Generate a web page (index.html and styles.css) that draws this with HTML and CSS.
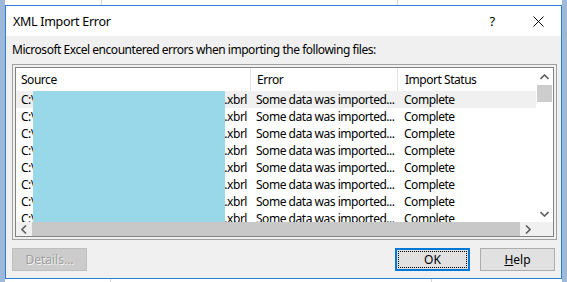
FILE: index.html
```html
<!DOCTYPE html>
<html>
<head>
    <meta charset="utf-8" />
    <title>XML Import Error</title>
    <link rel="stylesheet" href="styles.css">
</head>
<body>
    <div class="dialog">
        <div class="titlebar">
            <div class="title">XML Import Error</div>
            <div class="caption-btn help-btn">?</div>
            <div class="caption-btn close-btn">
                <svg width="11" height="11" viewBox="0 0 11 11">
                    <path d="M0.5 0.5 L10.5 10.5 M10.5 0.5 L0.5 10.5" stroke="#000" stroke-width="1" fill="none" />
                </svg>
            </div>
        </div>
        <div class="dialog-body">
            <div class="message">Microsoft Excel encountered errors when importing the following files:</div>
            <div class="frame">
                <div class="listview">
                    <div class="list-main">
                        <div class="list-head">
                            <div class="col col-source">Source</div>
                            <div class="col col-error">Error</div>
                            <div class="col col-status">Import Status</div>
                        </div>
                        <div class="list-rows">
                            <div class="row selected">
                                <div class="col col-source"><span>C:\</span><span>.xbrl</span></div>
                                <div class="col col-error">Some data was imported...</div>
                                <div class="col col-status">Complete</div>
                            </div>
                            <div class="row">
                                <div class="col col-source"><span>C:\</span><span>.xbrl</span></div>
                                <div class="col col-error">Some data was imported...</div>
                                <div class="col col-status">Complete</div>
                            </div>
                            <div class="row">
                                <div class="col col-source"><span>C:\</span><span>.xbrl</span></div>
                                <div class="col col-error">Some data was imported...</div>
                                <div class="col col-status">Complete</div>
                            </div>
                            <div class="row">
                                <div class="col col-source"><span>C:\</span><span>.xbrl</span></div>
                                <div class="col col-error">Some data was imported...</div>
                                <div class="col col-status">Complete</div>
                            </div>
                            <div class="row">
                                <div class="col col-source"><span>C:\</span><span>.xbrl</span></div>
                                <div class="col col-error">Some data was imported...</div>
                                <div class="col col-status">Complete</div>
                            </div>
                            <div class="row">
                                <div class="col col-source"><span>C:\</span><span>.xbrl</span></div>
                                <div class="col col-error">Some data was imported...</div>
                                <div class="col col-status">Complete</div>
                            </div>
                            <div class="row">
                                <div class="col col-source"><span>C:\</span><span>.xbrl</span></div>
                                <div class="col col-error">Some data was imported...</div>
                                <div class="col col-status">Complete</div>
                            </div>
                            <div class="row">
                                <div class="col col-source"><span>C:\</span><span>.xbrl</span></div>
                                <div class="col col-error">Some data was imported...</div>
                                <div class="col col-status">Complete</div>
                            </div>
                            <div class="redact"></div>
                        </div>
                    </div>
                    <div class="vscroll">
                        <div class="sb-btn">
                            <svg width="9" height="6" viewBox="0 0 9 6"><path d="M0.5 5 L4.5 1 L8.5 5" stroke="#606060" stroke-width="1.6" fill="none" /></svg>
                        </div>
                        <div class="vthumb"></div>
                        <div class="vtrack"></div>
                        <div class="sb-btn">
                            <svg width="9" height="6" viewBox="0 0 9 6"><path d="M0.5 1 L4.5 5 L8.5 1" stroke="#606060" stroke-width="1.6" fill="none" /></svg>
                        </div>
                    </div>
                    <div class="hscroll">
                        <div class="sb-btn h">
                            <svg width="6" height="9" viewBox="0 0 6 9"><path d="M5 0.5 L1 4.5 L5 8.5" stroke="#606060" stroke-width="1.6" fill="none" /></svg>
                        </div>
                        <div class="hthumb"></div>
                        <div class="sb-btn h">
                            <svg width="6" height="9" viewBox="0 0 6 9"><path d="M1 0.5 L5 4.5 L1 8.5" stroke="#606060" stroke-width="1.6" fill="none" /></svg>
                        </div>
                    </div>
                    <div class="corner"></div>
                </div>
            </div>
            <div class="buttons">
                <div class="btn disabled">Details...</div>
                <div class="spacer"></div>
                <div class="btn default"><span class="focus">OK</span></div>
                <div class="btn"><u>H</u>elp</div>
            </div>
        </div>
    </div>
</body>
</html>
```

FILE: styles.css
```css
/* excel sheet behind the dialog */
html, body {
    margin: 0;
    height: 100%;
}

body {
    padding: 5px 0 0 5px;
    box-sizing: border-box;
    font-family: "Noto Sans", "Open Sans", sans-serif;
    font-size: 12px;
    letter-spacing: -0.47px;
    color: #000;
    background:
        linear-gradient(#9db8d8, #9db8d8) 0 8px / 5px 1px repeat-y,
        linear-gradient(#9db8d8, #9db8d8) right 0 top 5px / 5px 1px repeat-y,
        linear-gradient(#d4d4d4, #d4d4d4) 101px 0 / 1px 5px no-repeat,
        linear-gradient(#d4d4d4, #d4d4d4) 397px 0 / 1px 5px no-repeat,
        linear-gradient(#d4d4d4, #d4d4d4) 110px 100% / 1px 4px no-repeat,
        linear-gradient(#d4d4d4, #d4d4d4) 431px 100% / 1px 4px no-repeat,
        linear-gradient(#dae2ec, #dae2ec) 0 0 / 5px 100% no-repeat,
        linear-gradient(#dae2ec, #dae2ec) 100% 0 / 5px 100% no-repeat,
        #fff;
    background-size: 5px 20px, 5px 20px, 1px 5px, 1px 5px, 1px 4px, 1px 4px, 5px 100%, 5px 100%;
}

/* dialog */
.dialog {
    width: 557px;
    height: 274px;
    box-sizing: border-box;
    border: 1px solid #2b7fd4;
    background: #f0f0f0;
    display: flex;
    flex-direction: column;
}

.titlebar {
    height: 30px;
    background: #fff;
    display: flex;
    align-items: center;
}

.title {
    flex: 1;
    padding-left: 7px;
    font-size: 12.5px;
    letter-spacing: -0.3px;
}

.caption-btn {
    width: 46px;
    height: 30px;
    display: flex;
    align-items: center;
    justify-content: center;
}

.help-btn {
    font-size: 13px;
}

.dialog-body {
    flex: 1;
    padding: 6px 5px 0 6px;
    display: flex;
    flex-direction: column;
}

.message {
    line-height: 16px;
    padding-left: 0;
    margin-bottom: 6px;
}

/* list view in its sunken frame */
.frame {
    width: 545px;
    height: 176px;
    box-sizing: border-box;
    border: 1px solid #a0a0a0;
    padding: 2px;
}

.listview {
    height: 100%;
    box-sizing: border-box;
    border: 1px solid #828282;
    background: #fff;
    display: grid;
    grid-template-columns: 1fr 17px;
    grid-template-rows: 1fr 14px;
}

.list-main {
    display: flex;
    flex-direction: column;
    overflow: hidden;
}

.list-head {
    height: 23px;
    flex: none;
    display: grid;
    grid-template-columns: 234px 147px 1fr;
    align-items: stretch;
}

.list-head .col {
    display: flex;
    align-items: center;
}

.list-head .col-error,
.list-head .col-status {
    border-left: 1px solid #e5e5e5;
}

.list-rows {
    flex: 1;
    position: relative;
    overflow: hidden;
}

.row {
    height: 17px;
    display: grid;
    grid-template-columns: 234px 147px 1fr;
    align-items: center;
    white-space: nowrap;
}

.row.selected {
    background: #f0f0f0;
}

.col {
    padding-left: 5px;
    overflow: hidden;
    white-space: nowrap;
}

.col-error,
.col-status {
    padding-left: 6px;
}

.row .col-source {
    display: flex;
    justify-content: space-between;
    padding-right: 3px;
}

.list-head .col-status,
.row .col-status {
    padding-left: 7px;
}

/* painted-over file paths */
.redact {
    position: absolute;
    left: 17px;
    top: 0;
    bottom: 0;
    width: 192px;
    background: #99d8e9;
}

/* scrollbars */
.vscroll {
    display: flex;
    flex-direction: column;
    background: #fff;
}

.sb-btn {
    height: 17px;
    flex: none;
    display: flex;
    align-items: center;
    justify-content: center;
}

.sb-btn.h {
    width: 16px;
    height: 14px;
}

.vthumb {
    height: 17px;
    margin: 0 1px;
    background: #cdcdcd;
}

.vtrack {
    flex: 1;
}

.hscroll {
    display: flex;
    background: #f0f0f0;
}

.hthumb {
    flex: 1;
    margin: 0;
    background: #c8c8c8;
}

.corner {
    background: #f0f0f0;
}

/* buttons */
.buttons {
    display: flex;
    margin-top: 8px;
    gap: 10px;
    padding-right: 1px;
}

.spacer {
    flex: 1;
}

.btn {
    width: 75px;
    height: 23px;
    box-sizing: border-box;
    border: 1px solid #adadad;
    background: #e1e1e1;
    display: flex;
    align-items: center;
    justify-content: center;
    letter-spacing: 0;
}

.btn.disabled {
    background: #cccccc;
    border-color: #bfbfbf;
    color: #a0a0a0;
    text-shadow: 1px 1px 0 #f4f4f4;
}

.btn.default {
    border: 2px solid #0078d7;
    padding: 1px;
}

.focus {
    flex: 1;
    align-self: stretch;
    display: flex;
    align-items: center;
    justify-content: center;
    border: 1px dotted #000;
}
```
